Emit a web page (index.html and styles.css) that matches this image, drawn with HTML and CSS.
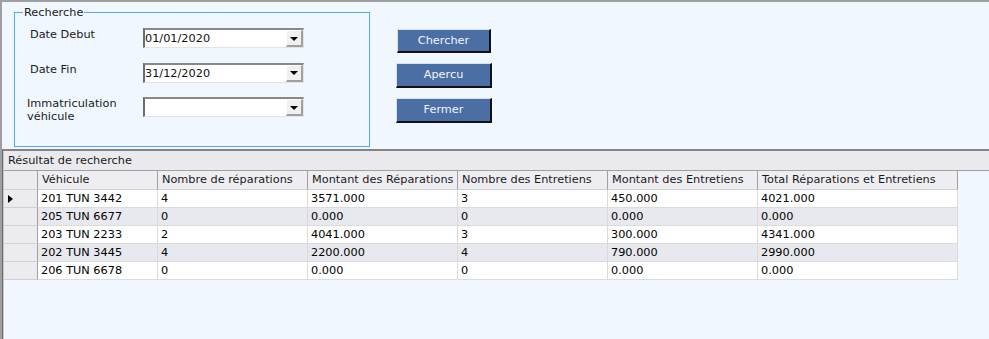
FILE: index.html
```html
<!DOCTYPE html>
<html lang="fr">
<head>
<meta charset="utf-8">
<title>Recherche</title>
<link rel="stylesheet" href="styles.css">
</head>
<body>
<div class="window">
  <div class="top">
    <fieldset class="group">
      <legend>Recherche</legend>
      <div class="form">
        <label class="lbl">Date Debut</label>
        <div class="combo"><span class="val">01/01/2020</span><span class="drop"><i></i></span></div>
        <label class="lbl">Date Fin</label>
        <div class="combo"><span class="val">31/12/2020</span><span class="drop"><i></i></span></div>
        <label class="lbl lbl-immat">Immatriculation<br>véhicule</label>
        <div class="combo"><span class="val"></span><span class="drop"><i></i></span></div>
      </div>
    </fieldset>
    <div class="buttons">
      <button class="btn btn-first">Chercher</button>
      <button class="btn">Apercu</button>
      <button class="btn">Fermer</button>
    </div>
  </div>
  <div class="bottom">
    <div class="band">Résultat de recherche</div>
    <div class="grid">
      <div class="row head">
        <div class="rh"></div>
        <div class="c">Véhicule</div>
        <div class="c">Nombre de réparations</div>
        <div class="c">Montant des Réparations</div>
        <div class="c">Nombre des Entretiens</div>
        <div class="c">Montant des Entretiens</div>
        <div class="c">Total Réparations et Entretiens</div>
      </div>
      <div class="row">
        <div class="rh"><span class="arrow"></span></div>
        <div class="c">201 TUN 3442</div><div class="c">4</div><div class="c">3571.000</div><div class="c">3</div><div class="c">450.000</div><div class="c">4021.000</div>
      </div>
      <div class="row alt">
        <div class="rh"></div>
        <div class="c">205 TUN 6677</div><div class="c">0</div><div class="c">0.000</div><div class="c">0</div><div class="c">0.000</div><div class="c">0.000</div>
      </div>
      <div class="row">
        <div class="rh"></div>
        <div class="c">203 TUN 2233</div><div class="c">2</div><div class="c">4041.000</div><div class="c">3</div><div class="c">300.000</div><div class="c">4341.000</div>
      </div>
      <div class="row alt">
        <div class="rh"></div>
        <div class="c">202 TUN 3445</div><div class="c">4</div><div class="c">2200.000</div><div class="c">4</div><div class="c">790.000</div><div class="c">2990.000</div>
      </div>
      <div class="row">
        <div class="rh"></div>
        <div class="c">206 TUN 6678</div><div class="c">0</div><div class="c">0.000</div><div class="c">0</div><div class="c">0.000</div><div class="c">0.000</div>
      </div>
    </div>
  </div>
</div>
</body>
</html>
```

FILE: styles.css
```css
* { box-sizing: border-box; }
html, body { margin: 0; padding: 0; }
body {
  font-family: "DejaVu Sans", Verdana, sans-serif;
  font-size: 11.3px;
  line-height: 13px;
  color: #111;
  background: #f0f7ff;
}
.window {
  width: 989px;
  height: 339px;
  display: flex;
  flex-direction: column;
  border-top: 2px solid #a0a0a0;
  border-left: 2px solid #a0a0a0;
  background: #f0f7ff;
  overflow: hidden;
}
.top {
  height: 147px;
  flex: none;
  display: flex;
  align-items: flex-start;
  padding-left: 12px;
}
.group {
  margin: 4px 0 0 0;
  padding: 0 0 23px 0;
  width: 356px;
  border: 1px solid #56a8f2;
  min-width: 0;
}
.group legend {
  margin-left: 8px;
  padding: 0 1px;
  line-height: 13px;
  color: #1a1a1a;
}
.form {
  padding-top: 9px;
  display: grid;
  grid-template-columns: 128px 161px;
  row-gap: 14.5px;
}
.lbl {
  align-self: start;
  padding-left: 15px;
  margin-top: 0;
  color: #1a1a1a;
}
.lbl-immat {
  align-self: center;
  padding-left: 12px;
  margin-top: 0;
}
.combo {
  height: 20px;
  display: flex;
  align-items: stretch;
  background: #fff;
  border-top: 2px solid #888;
  border-left: 2px solid #6c6c6c;
  border-right: 1px solid #e3e3e3;
  border-bottom: 1px solid #e3e3e3;
}
.val {
  flex: 1;
  padding-left: 0;
  line-height: 17px;
  color: #111;
}
.drop {
  width: 17px;
  display: flex;
  align-items: center;
  justify-content: center;
  background: #f0f0f0;
  border-top: 1px solid #fff;
  border-left: 1px solid #fff;
  border-right: 2px solid #a0a0a0;
  border-bottom: 2px solid #a0a0a0;
}
.drop i {
  width: 0;
  height: 0;
  border-left: 4px solid transparent;
  border-right: 4px solid transparent;
  border-top: 4px solid #000;
  margin-top: 1px;
}
.buttons {
  margin-left: 26px;
  margin-top: 27px;
  display: flex;
  flex-direction: column;
  gap: 10px;
}
.btn {
  width: 96px;
  height: 25px;
  padding: 0;
  font: inherit;
  color: #f2f4ff;
  background: #4b6fa4;
  border-top: 1px solid #d6e2f2;
  border-left: 1px solid #d6e2f2;
  border-right: 2px solid #111;
  border-bottom: 2px solid #111;
  text-align: center;
  line-height: 20px;
}
.btn-first {
  width: 94px;
  height: 24px;
  margin-left: 1px;
}
.bottom {
  flex: 1;
  border-top: 2px solid #858585;
  border-left: 1px solid #6a6a6a;
  box-shadow: inset 1px 0 0 #c8c8c8;
  padding-left: 1px;
  background: #f0f7ff;
}
.band {
  height: 20px;
  padding-left: 4px;
  line-height: 19px;
  background: #e9e9ee;
  border-bottom: 1px solid #a0a0a0;
  color: #1a1a1a;
}
.grid {
  width: 954px;
}
.row {
  display: grid;
  grid-template-columns: 34px 120px 150px 150px 150px 150px 200px;
  height: 18px;
  background: #fff;
}
.row.alt { background: #e8e9ee; }
.row.head {
  height: 19px;
  background: #eeeef2;
}
.c {
  padding-left: 3px;
  line-height: 17px;
  white-space: nowrap;
  overflow: hidden;
  border-right: 1px solid #dadada;
  border-bottom: 1px solid #dcdcdc;
  color: #000;
}
.head .c {
  padding-left: 4px;
  line-height: 18px;
  border-right: 1px solid #a0a0a0;
  border-bottom: 1px solid #cfcfcf;
  color: #1a1a1a;
}
.rh {
  background: #ececf0;
  border-right: 1px solid #a0a0a0;
  border-bottom: 1px solid #d0d0d0;
  display: flex;
  align-items: center;
  padding-left: 4px;
}
.head .rh { border-bottom: 1px solid #cfcfcf; }
.arrow {
  width: 0;
  height: 0;
  border-left: 5px solid #000;
  border-top: 4px solid transparent;
  border-bottom: 4px solid transparent;
}
```
